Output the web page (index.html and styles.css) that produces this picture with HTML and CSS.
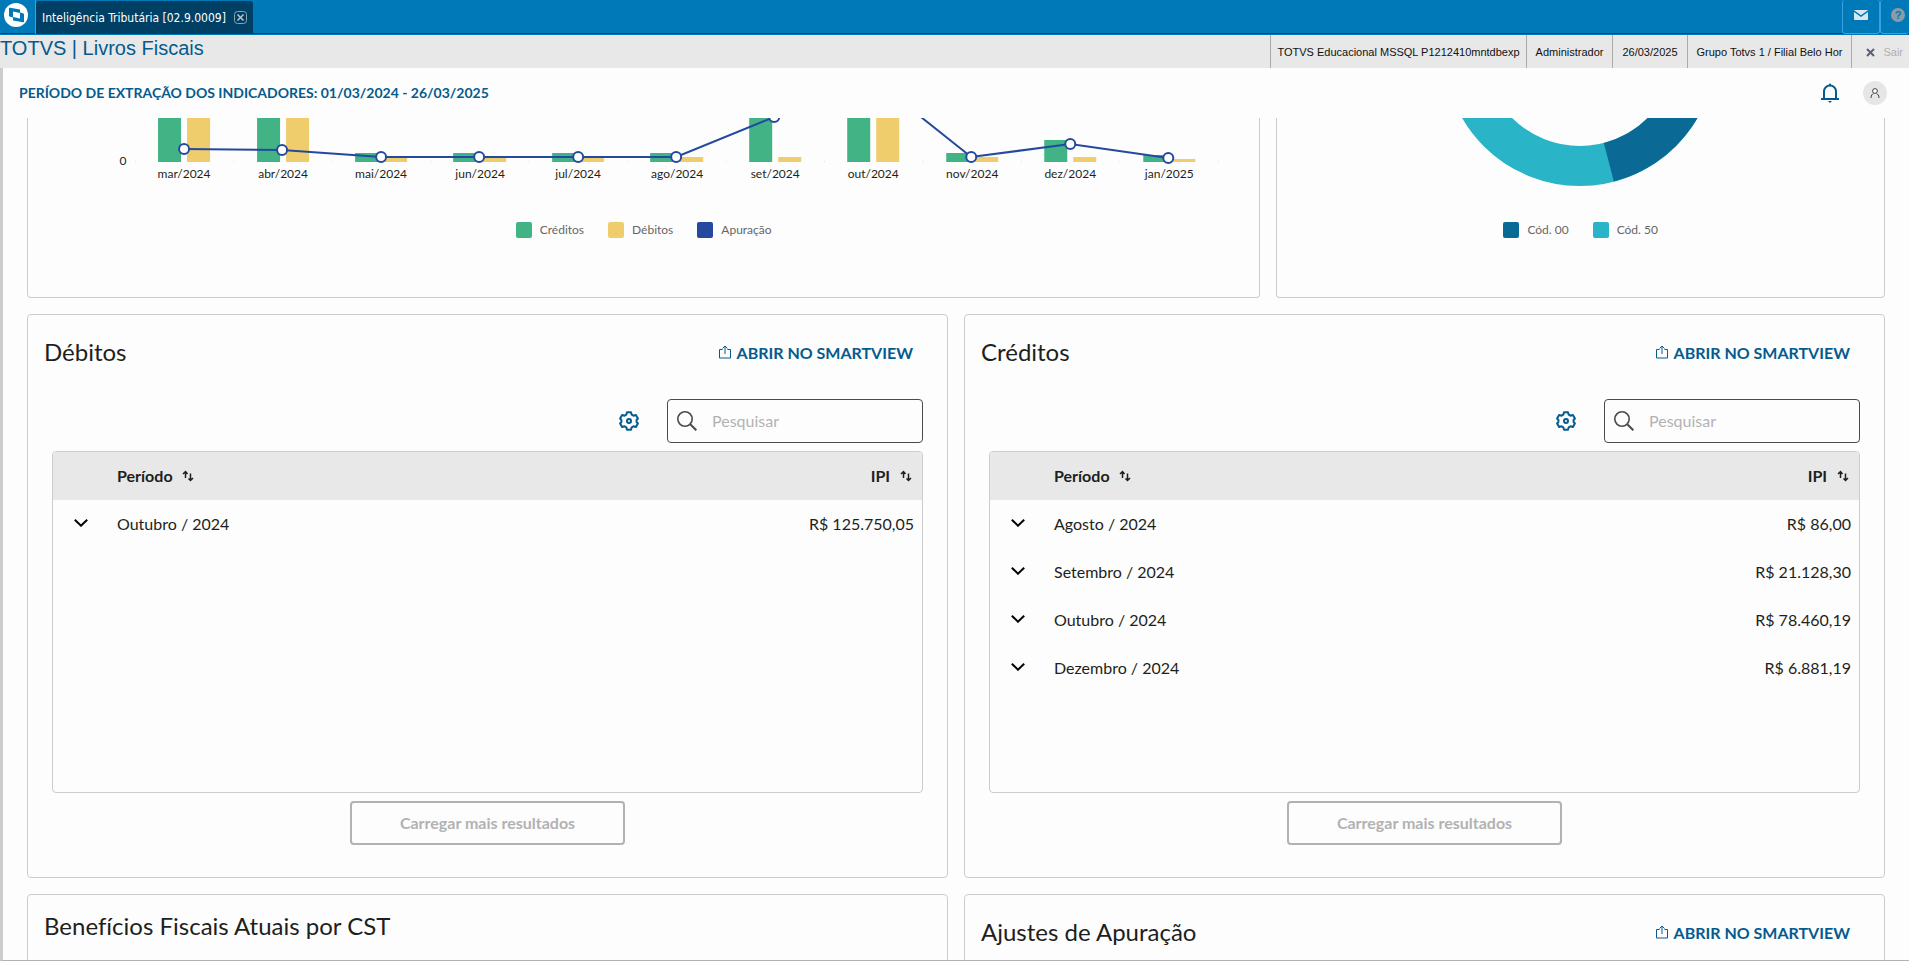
FILE: index.html
```html
<!DOCTYPE html>
<html lang="pt-BR">
<head>
  <meta charset="UTF-8" />
  <meta name="viewport" content="width=device-width, initial-scale=1.0" />
  <title>Inteligência Tributária</title>
  <link rel="stylesheet" href="styles.css">
</head>
<body>

  <!-- ícones usados mais de uma vez -->
  <svg class="sprite" aria-hidden="true">
    <symbol id="icon-share" viewBox="0 0 12 14">
      <path d="M3.500 4.500H.5v8.500h11V4.500h-3M6 9V1M3.500 3.500L6 1l2.500 2.500" fill="none" stroke="currentColor" />
    </symbol>
    <symbol id="icon-gear" viewBox="0 0 20 20">
      <path d="M8 1.200h4l.7 2.500 1.700 1 2.500-.7 2 3.500-1.300 1.500v2l1.300 1.500-2 3.500-2.500-.7-1.700 1-.7 2.500H8l-.7-2.500-1.700-1-2.500.7-2-3.500L2.400 11V9L1.100 7.500l2-3.500 2.500.7 1.700-1z" fill="none" stroke="currentColor" stroke-width="2" stroke-linejoin="round" />
      <circle cx="10" cy="10" r="2" fill="none" stroke="currentColor" stroke-width="2" />
    </symbol>
    <symbol id="icon-search" viewBox="0 0 20 20">
      <circle cx="8" cy="8" r="7.200" fill="none" stroke="currentColor" stroke-width="1.600" />
      <path d="M13 13l6.300 6.300" stroke="currentColor" stroke-width="2" />
    </symbol>
    <symbol id="icon-sort" viewBox="0 0 12 12">
      <path d="M3.500 8V1.500M1 4l2.500-2.500L5.500 4M8.500 3.500V10.500M6.500 8.500l2 2 2.500-2.500" fill="none" stroke="currentColor" stroke-width="1.500" />
    </symbol>
    <symbol id="icon-chevron" viewBox="0 0 14 8">
      <path d="M.8.8L7 6.700 13.200.8" fill="none" stroke="currentColor" stroke-width="2" />
    </symbol>
  </svg>

  <!-- === BARRA DE ABAS === -->
  <nav class="tabbar">
    <a class="logo" href="#" aria-label="TOTVS">
      <svg width="24" height="24" viewBox="0 0 24 24">
        <circle cx="12" cy="12" r="12" fill="#fff" />
        <path d="M5 5.500Q5 4.500 6 4.700L16 6.500V9.500L19 10.200Q20 10.500 20 11.500V18.500Q20 19.500 19 19.300L9 17.500V14.500L6 13.800Q5 13.500 5 12.500z" fill="#0079b8" />
        <path d="M9 8.500L16 10V15.500L9 14z" fill="#fff" />
      </svg>
    </a>
    <div class="tab">
      <span>Inteligência Tributária [02.9.0009]</span>
      <button class="tab-close" aria-label="Fechar aba">
        <svg width="13" height="13" viewBox="0 0 13 13">
          <rect x=".5" y=".5" width="12" height="12" rx="3" fill="none" stroke="#8aa4b5" />
          <path d="M3.500 3.500l6 6M9.500 3.500l-6 6" stroke="#b9c9d3" stroke-width="1.500" />
        </svg>
      </button>
    </div>
    <button class="bar-btn mail" aria-label="Mensagens">
      <svg width="14" height="10" viewBox="0 0 14 10">
        <rect width="14" height="10" rx="1" fill="#d9e6ee" />
        <path d="M0 1l7 5 7-5" fill="none" stroke="#0079b8" stroke-width="1.500" />
      </svg>
    </button>
    <button class="bar-btn help" aria-label="Ajuda"><span>?</span></button>
  </nav>

  <!-- === BARRA DO SISTEMA === -->
  <header class="sysbar">
    <h1>TOTVS | Livros Fiscais</h1>
    <ul class="session">
      <li class="env">TOTVS Educacional MSSQL P1212410mntdbexp</li>
      <li>Administrador</li>
      <li>26/03/2025</li>
      <li>Grupo Totvs 1 / Filial Belo Hor</li>
      <li class="exit">
        <button>
          <svg width="9" height="9" viewBox="0 0 9 9"><path d="M1 1l7 7M8 1L1 8" stroke="#5d5f7e" stroke-width="2" /></svg>
          Sair
        </button>
      </li>
    </ul>
  </header>

  <main class="page">
    <div class="page-header">
      <h2>PERÍODO DE EXTRAÇÃO DOS INDICADORES: 01/03/2024 - 26/03/2025</h2>
      <button class="bell" aria-label="Notificações">
        <svg width="18" height="20" viewBox="0 0 18 20">
          <path d="M3 15.500V8.500a6 6 0 0 1 12 0v7M0 16h18" fill="none" stroke="currentColor" stroke-width="2" />
          <path d="M7 3L9 0l2 3zM7 18h4l-2 2z" fill="currentColor" />
        </svg>
      </button>
      <button class="avatar" aria-label="Usuário">
        <svg width="10" height="10" viewBox="0 0 10 10">
          <circle cx="5" cy="3" r="2.400" fill="#fff" stroke="#444" />
          <path d="M1 10c0-3 1.500-4 2.500-4.500M9 10c0-3-1.500-4-2.500-4.500" fill="none" stroke="#444" />
        </svg>
      </button>
    </div>

    <div class="dashboard">
      <!-- Gráfico de barras -->
      <section class="card chart-card wide">
        <svg class="plot" viewBox="28 118 1231 70" role="img" aria-label="Apuração por mês">
          <g fill="#41b384">
            <path d="M158 118h23v44h-23zM257 118h23v44h-23zM355 153h23v9h-23zM453 153h23v9h-23zM552 153h23v9h-23zM650 153h23v9h-23zM749 118h23v44h-23zM847 118h23v44h-23zM946 153h23v9h-23zM1044 140h23v22h-23zM1143 155h23v7h-23z" />
          </g>
          <g fill="#f0cd6c">
            <path d="M187 118h23v44h-23zM286 118h23v44h-23zM384 157h23v5h-23zM483 157h23v5h-23zM581 157h23v5h-23zM680 157h23v5h-23zM778 157h23v5h-23zM876 118h23v44h-23zM975 157h23v5h-23zM1073 157h23v5h-23zM1172 159h23v3h-23z" />
          </g>
          <path d="M135 161.500h1085" stroke="#ddd" stroke-dasharray="1 97.400" />
          <path d="M184 149L282 150 381 157 479 157 578 157 676 157 774 117 873 79 971 157 1070 144 1168 158" fill="none" stroke="#234a9f" stroke-width="2" />
          <g fill="#fff" stroke="#234a9f" stroke-width="2">
            <circle cx="184" cy="149" r="5" />
            <circle cx="282" cy="150" r="5" />
            <circle cx="381" cy="157" r="5" />
            <circle cx="479" cy="157" r="5" />
            <circle cx="578" cy="157" r="5" />
            <circle cx="676" cy="157" r="5" />
            <circle cx="774" cy="117" r="5" />
            <circle cx="971" cy="157" r="5" />
            <circle cx="1070" cy="144" r="5" />
            <circle cx="1168" cy="158" r="5" />
          </g>
          <g class="axis" text-anchor="middle">
            <text x="123" y="165">0</text>
            <text x="184" y="178">mar/2024</text>
            <text x="283" y="178">abr/2024</text>
            <text x="381" y="178">mai/2024</text>
            <text x="480" y="178">jun/2024</text>
            <text x="578" y="178">jul/2024</text>
            <text x="677" y="178">ago/2024</text>
            <text x="775" y="178">set/2024</text>
            <text x="873" y="178">out/2024</text>
            <text x="972" y="178">nov/2024</text>
            <text x="1070" y="178">dez/2024</text>
            <text x="1169" y="178">jan/2025</text>
          </g>
        </svg>
        <ul class="legend">
          <li><i class="green"></i>Créditos</li>
          <li><i class="yellow"></i>Débitos</li>
          <li><i class="blue"></i>Apuração</li>
        </ul>
      </section>

      <!-- Gráfico de rosca -->
      <section class="card chart-card narrow">
        <svg class="plot" viewBox="1277 118 607 70" role="img" aria-label="Distribuição por código">
          <circle cx="1580" cy="50" r="116" fill="none" stroke="#2ab4c7" stroke-width="40" />
          <path d="M1580 -66A116 116 0 0 1 1609 162.300" fill="none" stroke="#0a6a95" stroke-width="40" />
        </svg>
        <ul class="legend">
          <li><i class="navy"></i>Cód. 00</li>
          <li><i class="cyan"></i>Cód. 50</li>
        </ul>
      </section>

      <!-- Débitos -->
      <section class="card">
        <div class="card-head">
          <h3>Débitos</h3>
          <a href="#"><svg width="12" height="14"><use href="#icon-share" /></svg>ABRIR NO SMARTVIEW</a>
        </div>
        <div class="tools">
          <button class="gear" aria-label="Configurar colunas"><svg width="20" height="20"><use href="#icon-gear" /></svg></button>
          <label class="search">
            <svg width="20" height="20"><use href="#icon-search" /></svg>
            <input type="text" placeholder="Pesquisar" aria-label="Pesquisar débitos">
          </label>
        </div>
        <div class="table-box">
          <table>
            <thead>
              <tr>
                <th class="toggle"></th>
                <th>Período <svg width="12" height="12"><use href="#icon-sort" /></svg></th>
                <th class="value">IPI <svg width="12" height="12"><use href="#icon-sort" /></svg></th>
              </tr>
            </thead>
            <tbody>
              <tr>
                <td class="toggle"><button aria-label="Expandir"><svg width="14" height="8"><use href="#icon-chevron" /></svg></button></td>
                <td>Outubro / 2024</td>
                <td class="value">R$ 125.750,05</td>
              </tr>
            </tbody>
          </table>
        </div>
        <button class="load-more" disabled>Carregar mais resultados</button>
      </section>

      <!-- Créditos -->
      <section class="card">
        <div class="card-head">
          <h3>Créditos</h3>
          <a href="#"><svg width="12" height="14"><use href="#icon-share" /></svg>ABRIR NO SMARTVIEW</a>
        </div>
        <div class="tools">
          <button class="gear" aria-label="Configurar colunas"><svg width="20" height="20"><use href="#icon-gear" /></svg></button>
          <label class="search">
            <svg width="20" height="20"><use href="#icon-search" /></svg>
            <input type="text" placeholder="Pesquisar" aria-label="Pesquisar créditos">
          </label>
        </div>
        <div class="table-box">
          <table>
            <thead>
              <tr>
                <th class="toggle"></th>
                <th>Período <svg width="12" height="12"><use href="#icon-sort" /></svg></th>
                <th class="value">IPI <svg width="12" height="12"><use href="#icon-sort" /></svg></th>
              </tr>
            </thead>
            <tbody>
              <tr>
                <td class="toggle"><button aria-label="Expandir"><svg width="14" height="8"><use href="#icon-chevron" /></svg></button></td>
                <td>Agosto / 2024</td>
                <td class="value">R$ 86,00</td>
              </tr>
              <tr>
                <td class="toggle"><button aria-label="Expandir"><svg width="14" height="8"><use href="#icon-chevron" /></svg></button></td>
                <td>Setembro / 2024</td>
                <td class="value">R$ 21.128,30</td>
              </tr>
              <tr>
                <td class="toggle"><button aria-label="Expandir"><svg width="14" height="8"><use href="#icon-chevron" /></svg></button></td>
                <td>Outubro / 2024</td>
                <td class="value">R$ 78.460,19</td>
              </tr>
              <tr>
                <td class="toggle"><button aria-label="Expandir"><svg width="14" height="8"><use href="#icon-chevron" /></svg></button></td>
                <td>Dezembro / 2024</td>
                <td class="value">R$ 6.881,19</td>
              </tr>
            </tbody>
          </table>
        </div>
        <button class="load-more" disabled>Carregar mais resultados</button>
      </section>

      <section class="card short">
        <h3>Benefícios Fiscais Atuais por CST</h3>
      </section>

      <section class="card">
        <div class="card-head">
          <h3>Ajustes de Apuração</h3>
          <a href="#"><svg width="12" height="14"><use href="#icon-share" /></svg>ABRIR NO SMARTVIEW</a>
        </div>
      </section>
    </div>
  </main>
</body>
</html>
```
FILE: styles.css
```css
* {
  margin: 0;
  padding: 0;
  box-sizing: border-box;
}

body {
  display: flex;
  flex-direction: column;
  height: 100vh;
  overflow: hidden;
  font-family: Lato, "Open Sans", sans-serif;
  font-size: 16px;
  font-variant-ligatures: none;
  color: #1d1f20;
  background: #fdfdfd;
}

ul {
  list-style: none;
}

button {
  font: inherit;
  background: none;
  border: none;
  cursor: pointer;
}

a {
  color: #045b8f;
  text-decoration: none;
}

svg {
  display: block;
}

.sprite {
  display: none;
}

/* === BARRA DE ABAS === */
.tabbar {
  display: flex;
  height: 35px;
  flex-shrink: 0;
  background: #0079b8;
  border-bottom: 1px solid #0079b8;
  box-shadow: inset 0 -1px #00456b;
}

.logo {
  width: 36px;
  padding: 3px 4px;
  border-right: 1px solid #38a0e0;
}

.tab {
  display: flex;
  align-items: center;
  gap: 8px;
  margin-top: 1px;
  padding: 0 6px;
  background: #004064;
  border-radius: 3px 3px 0 0;
  font-family: "DejaVu Sans Condensed", "DejaVu Sans", sans-serif;
  font-size: 12px;
  color: #fff;
}

.bar-btn {
  display: flex;
  align-items: center;
  justify-content: center;
  width: 38px;
  height: 34px;
  padding-bottom: 4px;
  border: 1px solid #38a0e0;
  border-top: none;
  border-radius: 3px;
}

.mail {
  margin-left: auto;
}

.help {
  width: 29px;
  border-right: none;
  justify-content: flex-end;
  padding-right: 4px;
}

.help span {
  width: 14px;
  height: 14px;
  border-radius: 50%;
  background: #8d9ba5;
  color: #0079b8;
  font: bold 11px/14px "Liberation Sans", sans-serif;
}

/* === BARRA DO SISTEMA === */
.sysbar {
  display: flex;
  justify-content: space-between;
  height: 33px;
  flex-shrink: 0;
  background: #e8e8e8;
  font-family: "Liberation Sans", Arial, sans-serif;
}

.sysbar h1 {
  font-size: 20px;
  line-height: 26px;
  font-weight: normal;
  color: #045b8f;
}

.session {
  display: flex;
  font-size: 11px;
  line-height: 34px;
  color: #111;
}

.session li {
  padding: 0 9px;
  border-left: 1px solid #aaa;
}

.session .env {
  padding: 0 6px;
}

.session .exit {
  padding: 0 6px 0 14px;
}

.exit button {
  display: flex;
  align-items: center;
  gap: 8px;
  color: #b0b0b0;
}

/* === PÁGINA === */
.page {
  display: flex;
  flex-direction: column;
  flex: 1;
  min-height: 0;
  border-left: 3px solid #ccc;
  border-bottom: 1px solid #b2b2b2;
}

.page-header {
  display: flex;
  align-items: center;
  height: 50px;
  flex-shrink: 0;
  padding: 0 22px 0 16px;
}

.page-header h2 {
  flex: 1;
  padding-bottom: 2px;
  font-size: 14px;
  font-weight: bold;
  color: #045b8f;
}

.bell {
  color: #045b8f;
  margin-right: 24px;
}

.avatar {
  display: flex;
  align-items: center;
  justify-content: center;
  width: 24px;
  height: 24px;
  border-radius: 50%;
  background: #e6e6e6;
}

.dashboard {
  display: grid;
  grid-template-columns: repeat(12, 1fr);
  align-items: start;
  gap: 16px;
  padding: 0 24px;
  overflow: hidden;
}

.card {
  grid-column: span 6;
  padding: 16px 24px 32px;
  border: 1px solid #ccc;
  border-radius: 4px;
}

.chart-card {
  height: 180px;
  padding: 0;
  border-top: none;
  border-radius: 0 0 4px 4px;
}

.wide {
  grid-column: span 8;
}

.narrow {
  grid-column: span 4;
}

.plot {
  width: 100%;
  margin-bottom: 34px;
}

.axis {
  font-size: 12px;
  fill: #1d1f20;
}

.legend {
  display: flex;
  justify-content: center;
  gap: 24px;
  font-size: 12px;
  line-height: 16px;
  color: #666;
}

.legend li {
  display: flex;
  gap: 8px;
}

.legend i {
  width: 16px;
  height: 16px;
  border-radius: 2px;
}

.green { background: #41b384; }
.yellow { background: #f0cd6c; }
.blue { background: #234a9f; }
.navy { background: #0a6a95; }
.cyan { background: #2ab4c7; }

.card h3 {
  font-size: 24px;
  line-height: 30px;
  font-weight: normal;
}

.card-head {
  display: flex;
  align-items: center;
  justify-content: space-between;
  height: 44px;
  margin: 0 10px 0 -8px;
  padding-bottom: 2px;
}

.card-head a {
  display: flex;
  align-items: center;
  gap: 6px;
  font-weight: bold;
}

.short {
  padding-left: 16px;
}

.tools {
  display: flex;
  align-items: center;
  justify-content: flex-end;
  gap: 28px;
  margin: 24px 0 8px;
}

.gear {
  color: #045b8f;
}

.search {
  display: flex;
  align-items: center;
  gap: 15px;
  width: 256px;
  height: 44px;
  padding: 0 9px;
  border: 1px solid #4a4a4a;
  border-radius: 4px;
  color: #4a4a4a;
}

.search input {
  flex: 1;
  min-width: 0;
  padding-bottom: 2px;
  font: inherit;
  border: none;
  outline: none;
  background: none;
}

.search input::placeholder {
  color: #b2b2b2;
}

/* === TABELAS === */
.table-box {
  height: 342px;
  border: 1px solid #ccc;
  border-radius: 4px;
  overflow: auto;
}

table {
  width: 100%;
  border-collapse: collapse;
}

th, td {
  height: 48px;
  padding: 0 8px 2px;
  text-align: left;
}

thead {
  background: #e8e8e8;
}

th svg {
  display: inline-block;
  margin-left: 6px;
}

.toggle {
  width: 56px;
  padding-left: 21px;
}

.toggle button {
  display: block;
}

.value {
  text-align: right;
}

th.value {
  padding-right: 10px;
}

.load-more {
  display: block;
  width: 275px;
  height: 44px;
  margin: 8px auto 0;
  padding-bottom: 2px;
  border: 2px solid #b2b2b2;
  border-radius: 4px;
  font-weight: bold;
  color: #b2b2b2;
}
```
